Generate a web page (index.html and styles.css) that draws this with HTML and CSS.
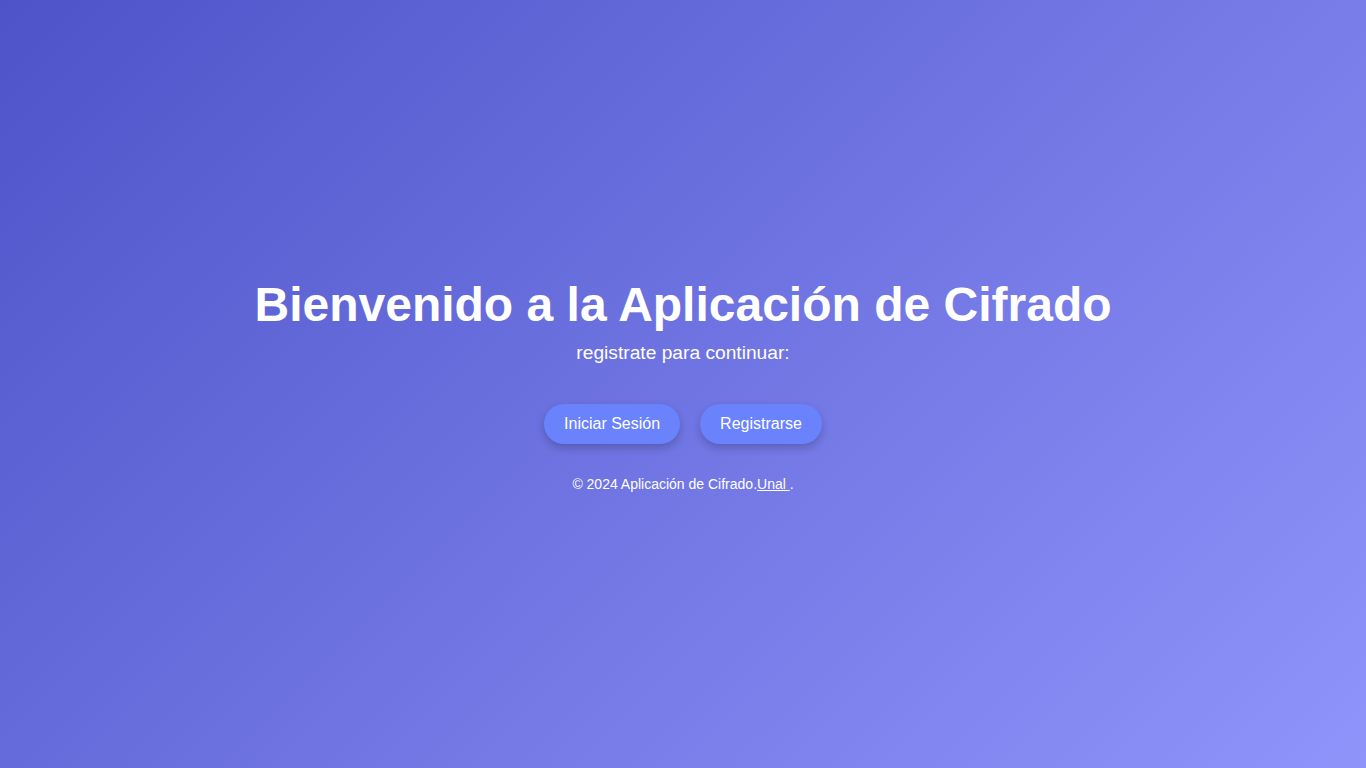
FILE: index.html
```html
<!DOCTYPE html>
<html lang="es">
<head>
<meta charset="utf-8">
<title>Aplicación de Cifrado</title>
<link rel="stylesheet" href="styles.css">
</head>
<body>
<main class="hero">
  <h1 class="title">Bienvenido a la Aplicación de Cifrado</h1>
  <p class="subtitle">registrate para continuar:</p>
  <div class="actions">
    <a class="btn" href="#">Iniciar Sesión</a>
    <a class="btn" href="#">Registrarse</a>
  </div>
  <footer class="footer">© 2024 Aplicación de Cifrado.<a class="footer-link" href="#">Unal </a>.</footer>
</main>
</body>
</html>
```

FILE: styles.css
```css
html, body {
  margin: 0;
  padding: 0;
  height: 100%;
}
body {
  font-family: "Liberation Sans", Arial, sans-serif;
  color: #fff;
  background: linear-gradient(135deg, #4e54c8 0%, #8f94fb 100%);
  min-height: 100vh;
}
.hero {
  min-height: 100vh;
  display: flex;
  flex-direction: column;
  align-items: center;
  justify-content: center;
  text-align: center;
}
.title {
  font-size: 48px;
  font-weight: bold;
  margin: 0 0 10px;
}
.subtitle {
  font-size: 19.2px;
  margin: 0 0 20px;
}
.actions {
  display: flex;
  gap: 20px;
  margin-top: 20px;
}
.btn {
  display: inline-block;
  padding: 0 20px;
  height: 40px;
  line-height: 40px;
  border-radius: 20px;
  background: #6a82fb;
  color: #fff;
  text-decoration: none;
  font-size: 16px;
  box-shadow: 0 4px 8px rgba(0, 0, 0, 0.2);
}
.footer {
  margin-top: 32px;
  font-size: 14px;
}
.footer-link {
  color: #fff;
  text-decoration: underline;
}
```
